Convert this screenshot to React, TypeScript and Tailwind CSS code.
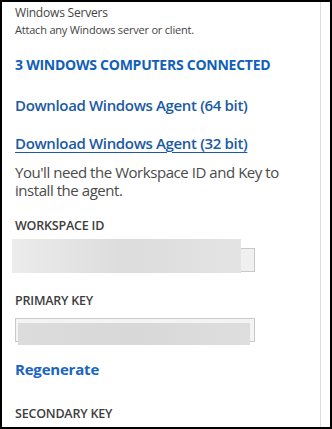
import React from 'react';

const font = { fontFamily: '"Open Sans", "Noto Sans", Arial, sans-serif' };

const App: React.FC = () => {
  return (
    <div className="w-[332px] h-[429px] bg-white border-2 border-black overflow-hidden" style={font}>
      <div className="flex h-full">
        {/* Main panel */}
        <div className="w-[318px] h-full pl-[13px] text-[#444]">
          <p className="text-[12px] leading-[16px] mt-[3px] tracking-[-0.2px]">Windows Servers</p>
          <p className="text-[11px] leading-[16px] mt-[1px] tracking-[-0.2px]">Attach any Windows server or client.</p>

          <h2 className="text-[14px] leading-[20px] font-bold text-[#125fb8] mt-[17px] tracking-[-0.25px]">
            3 WINDOWS COMPUTERS CONNECTED
          </h2>

          <a className="block text-[15px] leading-[20px] font-semibold text-[#1b5aa5] mt-[20px] tracking-[-0.35px]">
            Download Windows Agent (64 bit)
          </a>
          <a className="block text-[15px] leading-[20px] font-semibold text-[#1b5aa5] mt-[18px] underline underline-offset-[3px] decoration-[1px] tracking-[-0.35px]">
            Download Windows Agent (32 bit)
          </a>

          <p className="text-[15px] leading-[18px] mt-[10px] text-[#4a4a4a] tracking-[-0.45px]">
            You'll need the Workspace ID and Key to install the agent.
          </p>

          <p className="text-[12.5px] leading-[16px] font-semibold mt-[19px] text-[#3d3d3d] tracking-[-0.2px]">WORKSPACE ID</p>
          <div className="relative mt-[14px] w-[240px] h-[24px] border border-[#c8c8c8] bg-[#f0f0f0]">
            <div className="absolute left-[-4px] top-[-10px] w-[229px] h-[34px] bg-gradient-to-r from-[#ececec] via-[#dcdcdc] to-[#e4e4e4]" />
          </div>

          <p className="text-[12.5px] leading-[16px] font-semibold mt-[21px] text-[#3d3d3d] tracking-[-0.2px]">PRIMARY KEY</p>
          <div className="relative mt-[9px] w-[240px] h-[24px] border border-[#c8c8c8] bg-[#f4f4f4]">
            <div className="absolute left-[2px] top-[4px] w-[232px] h-[22px] bg-gradient-to-r from-[#dcdcdc] via-[#d8d8d8] to-[#dedede]" />
          </div>

          <a className="block text-[15px] leading-[20px] font-bold text-[#1a65c0] mt-[17px] tracking-[-0.2px]">
            Regenerate
          </a>

          <p className="text-[12.5px] leading-[16px] font-semibold mt-[27px] text-[#3d3d3d] tracking-[-0.2px]">SECONDARY KEY</p>
        </div>
        {/* Scrollbar edge */}
        <div className="w-px h-full bg-[#dcdcdc]" />
        <div className="flex-1" />
      </div>
    </div>
  );
};

export default App;
